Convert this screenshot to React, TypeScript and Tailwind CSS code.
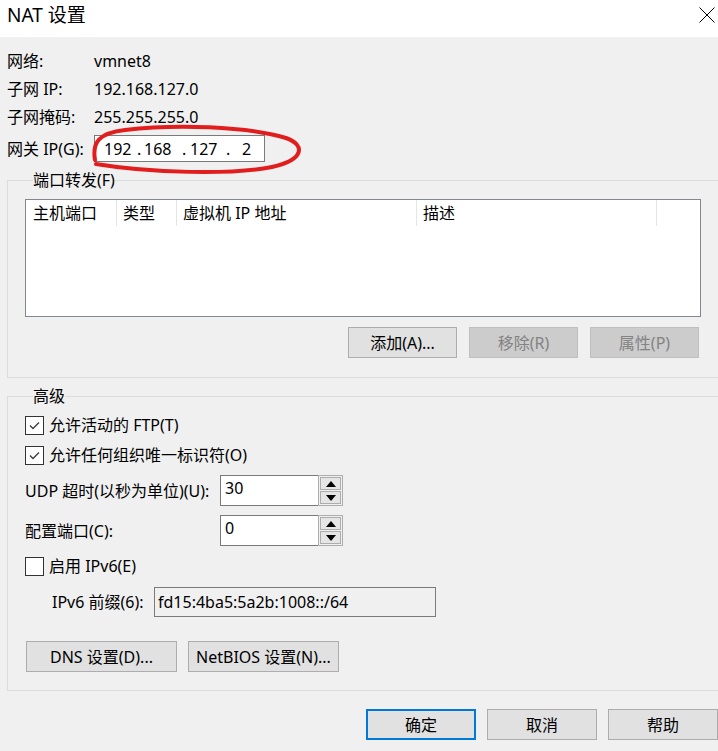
import React from 'react';

const font = { fontFamily: '"Noto Sans", "Noto Sans CJK SC", sans-serif' };

function Btn({ label, disabled, primary, w = 'w-[109px]' }: { label: string; disabled?: boolean; primary?: boolean; w?: string }) {
  const base = 'h-[31px] flex items-center justify-center leading-none';
  if (disabled) {
    return <div className={`${base} ${w} bg-[#cccccc] border border-[#bfbfbf] text-[#838383]`}>{label}</div>;
  }
  if (primary) {
    return <div className={`${base} ${w} bg-[#e1e1e1] border-2 border-[#0078d7]`}>{label}</div>;
  }
  return <div className={`${base} ${w} bg-[#e1e1e1] border border-[#adadad]`}>{label}</div>;
}

function Check({ checked, label }: { checked: boolean; label: string }) {
  return (
    <div className="flex items-center h-[22px]">
      <div className="w-[19px] h-[19px] border border-[#333333] bg-white flex items-center justify-center">
        {checked && (
          <svg width="13" height="13" viewBox="0 0 13 13">
            <path d="M2 6.5 L5 9.5 L11 3.5" fill="none" stroke="#3c3c3c" strokeWidth="1.3" />
          </svg>
        )}
      </div>
      <span className="ml-[5px] leading-none">{label}</span>
    </div>
  );
}

function Spin({ value }: { value: string }) {
  return (
    <div className="flex w-[123px] h-[31px]">
      <div className="w-[98px] h-full bg-white border border-[#7a7a7a] border-r-0 pl-[4px] pt-[2px] leading-[20px]">{value}</div>
      <div className="w-[25px] h-full border border-[#adadad] flex flex-col gap-[1px] p-[1px]">
        <div className="flex-1 bg-[#e5e5e5] border border-[#adadad] flex items-center justify-center">
          <svg width="10" height="6" viewBox="0 0 10 6"><path d="M0 6 L5 0 L10 6 Z" fill="#000" /></svg>
        </div>
        <div className="flex-1 bg-[#e5e5e5] border border-[#adadad] flex items-center justify-center">
          <svg width="10" height="6" viewBox="0 0 10 6"><path d="M0 0 L10 0 L5 6 Z" fill="#000" /></svg>
        </div>
      </div>
    </div>
  );
}

export default function App() {
  return (
    <div className="relative w-[718px] h-[751px] overflow-hidden bg-[#f0f0f0] text-[16px] text-black" style={font}>
      {/* title bar */}
      <div className="h-[37px] bg-white flex items-center justify-between pl-[7px] pr-[3px]">
        <span className="text-[19px] leading-none mb-[6px]">NAT 设置</span>
        <svg width="16" height="16" viewBox="0 0 16 16" className="mb-[7px]">
          <path d="M0.5 0.5 L15.5 15.5 M15.5 0.5 L0.5 15.5" stroke="#000" strokeWidth="1" />
        </svg>
      </div>

      {/* network info */}
      <div className="pt-[10px] pl-[7px]">
        {[
          ['网络:', 'vmnet8'],
          ['子网 IP:', '192.168.127.0'],
          ['子网掩码:', '255.255.255.0'],
        ].map(([k, v]) => (
          <div key={k} className="flex items-center h-[28px]">
            <span className="w-[87px]">{k}</span>
            <span>{v}</span>
          </div>
        ))}
        <div className="flex items-center h-[27px] mt-[4px]">
          <span className="w-[87px]">网关 IP(G):</span>
          <div className="w-[171px] h-[27px] bg-white border border-[#7a7a7a] pl-[9px] flex items-center leading-none">
            <span className="w-[33px]">192</span>
            <span className="w-[7px]">.</span>
            <span className="w-[38px]">168</span>
            <span className="w-[8px]">.</span>
            <span className="w-[36px]">127</span>
            <span className="w-[16px]">.</span>
            <span>2</span>
          </div>
        </div>
      </div>

      {/* port forwarding */}
      <fieldset className="mt-[8px] ml-[7px] w-[730px] border border-[#dcdcdc] pl-[17px] pb-[19px]">
        <legend className="ml-[8px] leading-[20px]">端口转发(F)</legend>
        <div className="mt-[9px] w-[676px] h-[118px] bg-white border border-[#828790]">
          <div className="flex h-[26px] items-center">
            <div className="w-[91px] h-[26px] pl-[7px] flex items-center border-r border-[#e5e5e5]">主机端口</div>
            <div className="w-[60px] h-[26px] pl-[6px] flex items-center border-r border-[#e5e5e5]">类型</div>
            <div className="w-[240px] h-[26px] pl-[6px] flex items-center border-r border-[#e5e5e5]">虚拟机 IP 地址</div>
            <div className="w-[240px] h-[26px] pl-[6px] flex items-center border-r border-[#e5e5e5]">描述</div>
          </div>
        </div>
        <div className="mt-[10px] w-[676px] pr-[2px] flex justify-end gap-[12px]">
          <Btn label="添加(A)..." />
          <Btn label="移除(R)" disabled />
          <Btn label="属性(P)" disabled />
        </div>
      </fieldset>

      {/* advanced */}
      <fieldset className="mt-[8px] ml-[7px] w-[730px] border border-[#dcdcdc] pl-[17px] pb-[18px]">
        <legend className="ml-[8px] leading-[20px]">高级</legend>
        <div className="mt-[8px]">
          <Check checked label="允许活动的 FTP(T)" />
        </div>
        <div className="mt-[8px]">
          <Check checked label="允许任何组织唯一标识符(O)" />
        </div>
        <div className="mt-[9px] flex items-center h-[31px]">
          <span className="w-[195px]">UDP 超时(以秒为单位)(U):</span>
          <Spin value="30" />
        </div>
        <div className="mt-[9px] flex items-center h-[31px]">
          <span className="w-[195px]">配置端口(C):</span>
          <Spin value="0" />
        </div>
        <div className="mt-[9px]">
          <Check checked={false} label="启用 IPv6(E)" />
        </div>
        <div className="mt-[10px] flex items-center h-[30px] pl-[27px]">
          <span className="w-[102px]">IPv6 前缀(6):</span>
          <div className="w-[282px] h-[30px] border border-[#7a7a7a] pl-[3px] flex items-center">fd15:4ba5:5a2b:1008::/64</div>
        </div>
        <div className="mt-[24px] ml-[1px] flex gap-[11px]">
          <Btn label="DNS 设置(D)..." w="w-[151px]" />
          <Btn label="NetBIOS 设置(N)..." w="w-[151px]" />
        </div>
      </fieldset>

      {/* dialog buttons */}
      <div className="mt-[18px] flex justify-end gap-[11px]">
        <Btn label="确定" primary w="w-[110px]" />
        <Btn label="取消" w="w-[110px]" />
        <Btn label="帮助" w="w-[110px]" />
      </div>

      {/* hand-drawn annotation */}
      <svg className="absolute left-0 top-0 pointer-events-none" width="718" height="751" viewBox="0 0 718 751">
        <path
          d="M95 160 C92 142 99 133 125 130 C175 124 245 126 286 138 C306 145 304 160 272 167 C232 175 150 173 96 164"
          fill="none"
          stroke="#e21d1d"
          strokeWidth="4"
          strokeLinecap="round"
        />
      </svg>
    </div>
  );
}
